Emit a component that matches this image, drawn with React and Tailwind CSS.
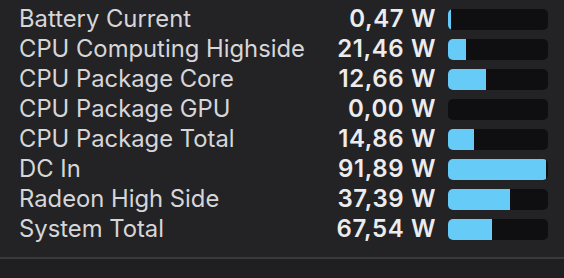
import React from 'react';

// lecturas de potencia, el ancho de la barra va medido a mano
const rows = [
  { name: 'Battery Current', value: '0,47 W', fill: 3 },
  { name: 'CPU Computing Highside', value: '21,46 W', fill: 18 },
  { name: 'CPU Package Core', value: '12,66 W', fill: 38 },
  { name: 'CPU Package GPU', value: '0,00 W', fill: 0 },
  { name: 'CPU Package Total', value: '14,86 W', fill: 26 },
  { name: 'DC In', value: '91,89 W', fill: 98 },
  { name: 'Radeon High Side', value: '37,39 W', fill: 62 },
  { name: 'System Total', value: '67,54 W', fill: 44 },
];

export default function App() {
  return (
    <div className="w-[564px] h-[278px] bg-[#232326] flex flex-col" style={{ fontFamily: 'Inter, "Noto Sans", sans-serif' }}>
      <div className="flex flex-col pt-[4px] pl-[19px] pr-[16px] h-[257px]">
        {rows.map((r) => (
          <div key={r.name} className="flex items-center h-[30px]">
            <span className="flex-1 text-[23.8px] text-[#d6d6d8] leading-none">{r.name}</span>
            <span className="text-[24px] font-semibold tracking-[0.6px] text-[#ececee] leading-none mr-[12px]">{r.value}</span>
            <div className="w-[100px] h-[21px] rounded-[5px] bg-[#0f0f11] overflow-hidden">
              <div className="h-full bg-[#67cbf8]" style={{ width: r.fill }} />
            </div>
          </div>
        ))}
      </div>
      <div className="h-[2px] bg-[#3a3a3d]" />
      <div className="flex-1 bg-[#1f1f21]" />
    </div>
  );
}
